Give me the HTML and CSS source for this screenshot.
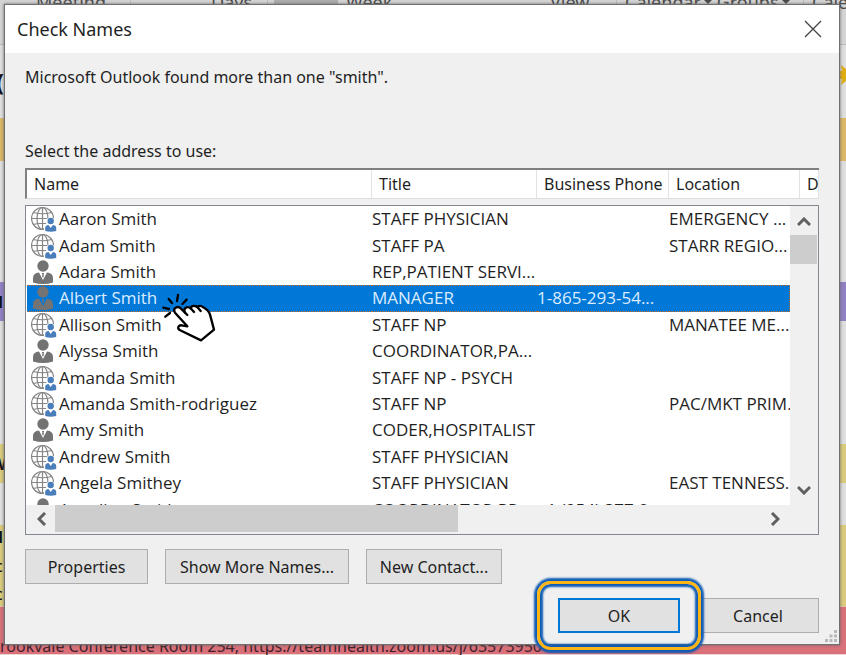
FILE: index.html
```html
<!DOCTYPE html>
<html lang="en">
<head>
    <meta charset="UTF-8">
    <meta name="viewport" content="width=device-width, initial-scale=1.0">
    <title>Check Names</title>
    <link rel="stylesheet" href="styles.css">
</head>
<body>
    <svg class="symbols" aria-hidden="true">
        <symbol id="person" viewBox="0 0 26 26">
            <circle cx="12" cy="7" r="5.700" fill="#737373"/>
            <path d="M2 23.500V19Q2 14 8 13.500L12 21L16 13.500Q22 14 22 19V23.500Q12 26.500 2 23.500Z" fill="#737373"/>
            <path d="M10.800 14H13.200L12.600 15.500L12.900 17L12 19L11.100 17L11.400 15.500Z" fill="#737373"/>
        </symbol>
        <symbol id="globe" viewBox="0 0 26 26">
            <g fill="none" stroke="#858585" stroke-width="1.200">
                <circle cx="11.500" cy="12.500" r="11"/>
                <ellipse cx="11.500" cy="12.500" rx="5.500" ry="11"/>
                <path d="M11.500 1.500V23.500M.5 12.500H22.500M2.500 6.500Q11.500 9 20.500 6.500M2.500 18.500Q11.500 16 20.500 18.500"/>
            </g>
            <path d="M13 26V20L15.500 17V13L19.500 10.500L24 13L26 20V26Z" fill="#fff"/>
            <circle cx="19.700" cy="15" r="3.200" fill="#4a7ebb"/>
            <path d="M14.200 25V22Q14.200 19.300 17.500 19L19.700 22L21.900 19Q25.200 19.300 25.200 22V25Q19.700 26.500 14.200 25Z" fill="#4a7ebb"/>
        </symbol>
    </svg>

    <div class="calendar">
        <div class="ribbon">
            <span class="meeting">Meeting</span>
            <span class="days">Days</span>
            <span class="selected"></span>
            <span class="week">Week</span>
            <span class="view">View</span>
            <span class="groups">Calendar<i></i> Groups<i></i></span>
            <span class="groups">Calendar</span>
        </div>
        <div class="band date">
            <b>(</b>
            <svg class="sun" width="24" height="24" viewBox="0 0 24 24"><path d="M12 0L14 6L19 2L18 8L24 8L19 12L24 16L18 16L19 22L14 18L12 24L10 18L5 22L6 16L0 16L5 12L0 8L6 8L5 2L10 6Z" fill="#e0ad12"/></svg>
        </div>
        <div class="band tan"></div>
        <div class="band day"></div>
        <div class="band purple"><b>H</b></div>
        <div class="band gap"></div>
        <div class="band yellow"><b>W</b></div>
        <div class="band space"></div>
        <div class="band yellow tall"><b>H</b><span>c</span><span>c</span></div>
        <div class="band red"><span>rookvale Conference Room 254, https://teamhealth.zoom.us/j/63573950</span></div>
    </div>

    <main class="dialog">
        <header class="title-bar">
            <h1>Check Names</h1>
            <button class="close" aria-label="Close">
                <svg width="18" height="18" viewBox="0 0 18 18"><path d="M1 1L17 17M17 1L1 17" stroke="#444" stroke-width="1.300"/></svg>
            </button>
        </header>
        <div class="content">
            <p class="message">Microsoft Outlook found more than one "smith".</p>
            <p class="prompt" id="prompt">Select the address to use:</p>
            <table class="columns">
                <colgroup><col><col class="c-title"><col class="c-phone"><col class="c-location"><col class="c-more"></colgroup>
                <thead>
                    <tr><th>Name</th><th>Title</th><th>Business Phone</th><th>Location</th><th>D</th></tr>
                </thead>
            </table>
            <div class="list">
                <div class="rows">
                    <table aria-labelledby="prompt">
                        <colgroup><col><col class="c-title"><col class="c-phone"><col class="c-place"></colgroup>
                        <tbody>
                            <tr><td><svg class="icon"><use href="#globe"/></svg>Aaron Smith</td><td>STAFF PHYSICIAN</td><td></td><td>EMERGENCY ...</td></tr>
                            <tr><td><svg class="icon"><use href="#globe"/></svg>Adam Smith</td><td>STAFF PA</td><td></td><td>STARR REGIO...</td></tr>
                            <tr><td><svg class="icon"><use href="#person"/></svg>Adara Smith</td><td>REP,PATIENT SERVI...</td><td></td><td></td></tr>
                            <tr class="active"><td><svg class="icon"><use href="#person"/></svg>Albert Smith</td><td>MANAGER</td><td>1-865-293-54...</td><td></td></tr>
                            <tr><td><svg class="icon"><use href="#globe"/></svg>Allison Smith</td><td>STAFF NP</td><td></td><td>MANATEE ME...</td></tr>
                            <tr><td><svg class="icon"><use href="#person"/></svg>Alyssa Smith</td><td>COORDINATOR,PA...</td><td></td><td></td></tr>
                            <tr><td><svg class="icon"><use href="#globe"/></svg>Amanda Smith</td><td>STAFF NP - PSYCH</td><td></td><td></td></tr>
                            <tr><td><svg class="icon"><use href="#globe"/></svg>Amanda Smith-rodriguez</td><td>STAFF NP</td><td></td><td>PAC/MKT PRIM...</td></tr>
                            <tr><td><svg class="icon"><use href="#person"/></svg>Amy Smith</td><td>CODER,HOSPITALIST</td><td></td><td></td></tr>
                            <tr><td><svg class="icon"><use href="#globe"/></svg>Andrew Smith</td><td>STAFF PHYSICIAN</td><td></td><td></td></tr>
                            <tr><td><svg class="icon"><use href="#globe"/></svg>Angela Smithey</td><td>STAFF PHYSICIAN</td><td></td><td>EAST TENNESS...</td></tr>
                            <tr><td><svg class="icon"><use href="#person"/></svg>Angelina Smith</td><td>COORDINATOR,PR...</td><td>+1 (954) 377-2...</td><td></td></tr>
                        </tbody>
                    </table>
                </div>
                <div class="scroll-y">
                    <button aria-label="Scroll up"><svg width="14" height="10" viewBox="0 0 14 10"><path d="M1 8L7 2L13 8"/></svg></button>
                    <div class="thumb"></div>
                    <button class="end" aria-label="Scroll down"><svg width="14" height="10" viewBox="0 0 14 10"><path d="M1 2L7 8L13 2"/></svg></button>
                </div>
                <div class="scroll-x">
                    <button aria-label="Scroll left"><svg width="10" height="14" viewBox="0 0 10 14"><path d="M8 1L2 7L8 13"/></svg></button>
                    <div class="thumb"></div>
                    <button class="end" aria-label="Scroll right"><svg width="10" height="14" viewBox="0 0 10 14"><path d="M2 1L8 7L2 13"/></svg></button>
                </div>
                <svg class="hand" viewBox="30 38 171 147" fill="none" stroke="#000" stroke-width="7" stroke-linecap="round" stroke-linejoin="round">
                    <path fill="#fff" d="M112 138L75 97Q69 87 77 82Q86 77 93 85L105 97Q100 84 110 81Q117 79 122 84Q124 75 134 77Q138 77 142 80Q151 73 160 81Q176 90 180 103L192 148L153 180L89 149Q81 143 87 137Q92 133 99 136Z"/>
                    <path d="M105 97L112 104M122 84L132 95M142 80L152 92"/>
                    <path d="M40 82L57 86M56 56L66 68M84 44L81 62M110 58L97 71M46 109L60 98"/>
                </svg>
            </div>
            <div class="buttons">
                <button class="btn small">Properties</button>
                <button class="btn large">Show More Names...</button>
                <button class="btn medium">New Contact...</button>
            </div>
            <div class="buttons confirm">
                <span class="ok-box"><button class="btn default">OK</button></span>
                <button class="btn cancel">Cancel</button>
            </div>
        </div>
        <svg class="grip" width="13" height="13" viewBox="0 0 13 13" fill="#b8b8b8">
            <path d="M9 0h3v3h-3zM9 4.500h3v3h-3zM4.500 4.500h3v3h-3zM9 9h3v3h-3zM4.500 9h3v3h-3zM0 9h3v3h-3z"/>
        </svg>
    </main>
</body>
</html>
```
FILE: styles.css
```css
* {
    box-sizing: border-box;
}
body {
    margin: 0;
    min-height: 100vh;
    position: relative;
    overflow: hidden;
    background-color: #dedede;
    color: #1f1f1f;
    font-family: "Noto Sans", "Open Sans", sans-serif;
    font-size: 16px;
    line-height: 24px;
}
.symbols {
    display: none;
}

/* calendar window behind the dialog */
.calendar {
    position: absolute;
    inset: 0;
    overflow: hidden;
    display: flex;
    flex-direction: column;
}
.ribbon {
    display: grid;
    grid-template-columns: 131px 137px 70px 212px 66px 187px 1fr;
    height: 45px;
    background-color: #d4d4d4;
    border-bottom: 1px solid #bbb;
    color: #4a4a4a;
    font-size: 18px;
    line-height: 4px;
}
.ribbon span {
    white-space: nowrap;
}
.ribbon .meeting {
    padding-left: 36px;
    border-right: 1px solid #bbb;
}
.ribbon .days {
    padding-left: 80px;
    border-right: 1px solid #bbb;
}
.ribbon .selected {
    margin-left: 6px;
    background-color: #adadad;
}
.ribbon .week {
    padding-left: 8px;
}
.ribbon .groups {
    padding-left: 8px;
    border-left: 1px solid #bbb;
}
.ribbon i {
    display: inline-block;
    margin-left: 3px;
    border: 4px solid transparent;
    border-top-color: #4a4a4a;
    vertical-align: middle;
}
.band {
    display: flex;
    justify-content: space-between;
    align-items: center;
    color: #101018;
}
.band b {
    margin-left: -9px;
}
.band.date {
    height: 73px;
    font-size: 24px;
}
.band.date b {
    margin-left: -4px;
}
.band .sun {
    margin-right: -14px;
    margin-bottom: 14px;
}
.band.tan {
    height: 43px;
    background-color: #dcb867;
}
.band.day {
    height: 121px;
}
.band.purple {
    height: 39px;
    background-color: #9180c4;
}
.band.gap {
    height: 123px;
}
.band.yellow {
    height: 39px;
    background-color: #d9cb7c;
}
.band.space {
    height: 42px;
}
.band.tall {
    height: 81px;
    flex-direction: column;
    align-items: flex-start;
}
.band.tall span {
    margin-left: -5px;
}
.band.red {
    flex: 1;
    align-items: flex-end;
    background-color: #d9707a;
    border-top: 1px solid #e8c0b0;
    border-bottom: 1px solid #eed5d5;
    color: #40222a;
    line-height: 16px;
}

/* dialog */
.dialog {
    position: relative;
    margin: 4px 6px 10px 4px;
    background-color: #f0f0f0;
    border: 1px solid #707070;
    box-shadow: 0 0 3px #666;
}
.title-bar {
    display: flex;
    justify-content: space-between;
    align-items: center;
    height: 48px;
    padding: 0 17px 0 12px;
    background-color: #fff;
}
h1 {
    margin: 0;
    font-size: 18px;
    font-weight: normal;
}
.close {
    display: flex;
    padding: 0;
    border: 0;
    background: none;
}
.content {
    padding: 12px 20px 11px;
}
.message,
.prompt {
    margin: 0;
}
.prompt {
    margin: 50px 0 5px;
}
table {
    width: 100%;
    table-layout: fixed;
    border-collapse: separate;
    border-spacing: 0;
}
.c-title {
    width: 165px;
}
.c-phone {
    width: 132px;
}
.c-location {
    width: 131px;
}
.c-place {
    width: 121px;
}
.c-more {
    width: 19px;
}
th,
td {
    padding: 0;
    font-weight: normal;
    text-align: left;
    white-space: nowrap;
    overflow: hidden;
}
.columns {
    background-color: #fff;
    border-top: 2px solid #808080;
    border-left: 2px solid #808080;
    border-bottom: 1px solid #ddd;
}
th {
    height: 28px;
    padding-left: 7px;
    border-right: 1px solid #e2e2e2;
}
.list {
    position: relative;
    display: grid;
    grid-template-columns: 1fr 28px;
    margin-top: 6px;
    background-color: #f0f0f0;
    border: 1px solid #828790;
}
.rows {
    height: 299px;
    padding-left: 1px;
    overflow: hidden;
    background-color: #fff;
    font-family: "Open Sans", "Noto Sans", sans-serif;
    font-size: 17px;
}
.rows table {
    height: 317px;
}
.rows td {
    line-height: 24px;
    padding: 1px 0;
}
.rows td:first-child {
    padding-left: 4px;
}
.icon {
    width: 26px;
    height: 26px;
    margin: -1px 2px -1px 0;
    vertical-align: top;
}
.active {
    background-color: #0078d7;
    color: #dcecff;
}
.rows .active td {
    padding-top: 0;
    padding-bottom: 0;
    border-top: 1px dotted #c86a20;
    border-bottom: 1px dotted #c86a20;
}
.rows .active td:last-child {
    border-right: 1px dotted #c86a20;
}
.scroll-y {
    display: flex;
    flex-direction: column;
    padding: 2px 1px 2px 0;
}
.scroll-y button,
.scroll-x button {
    display: flex;
    align-items: center;
    justify-content: center;
    width: 27px;
    height: 27px;
    padding: 0;
    border: 0;
    background: none;
}
.scroll-y path,
.scroll-x path {
    fill: none;
    stroke: #606060;
    stroke-width: 3;
}
.scroll-y .thumb {
    height: 29px;
    background-color: #cdcdcd;
}
.scroll-x {
    display: flex;
    height: 29px;
    padding: 0 2px 2px;
}
.scroll-x .thumb {
    width: 53%;
    background-color: #cdcdcd;
}
.scroll-y .end {
    margin-top: auto;
}
.scroll-x .end {
    margin-left: auto;
}
.hand {
    position: absolute;
    top: 87px;
    left: 134px;
    width: 57px;
    height: 49px;
}
.buttons {
    display: flex;
    gap: 17px;
    margin-top: 14px;
}
.confirm {
    justify-content: flex-end;
}
.btn {
    height: 35px;
    padding: 0;
    border: 1px solid #adadad;
    background-color: #e1e1e1;
    color: #1f1f1f;
    font-family: inherit;
    font-size: 16px;
}
.small {
    width: 123px;
}
.large {
    width: 184px;
}
.medium {
    width: 136px;
}
.default,
.cancel {
    width: 122px;
}
.default {
    border: 2px solid #0078d7;
}
.ok-box {
    position: relative;
}
/* highlight ring around the OK button */
.ok-box::after {
    content: "";
    position: absolute;
    inset: -17px -21px;
    border: 3px solid #fdb515;
    border-radius: 14px;
    box-shadow: 0 0 2px 3px #0f5cb5, inset 0 0 2px 3px #0f5cb5;
    pointer-events: none;
}
.grip {
    position: absolute;
    right: 1px;
    bottom: 1px;
}
```
